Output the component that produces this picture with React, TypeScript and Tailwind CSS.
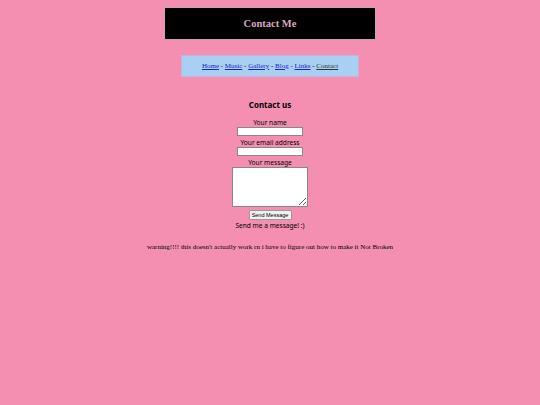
export default function App() {
  return (
    <div className="min-h-[405px] w-full bg-[#f48fb1] pt-[7px] font-['Liberation_Serif',serif] text-black">
      <div className="mx-auto flex h-[33px] w-[212px] items-center justify-center border border-[#c9a0b4] bg-black">
        <h1 className="text-[10.5px] font-bold text-[#dcaac2]">Contact Me</h1>
      </div>

      <nav className="mx-auto mt-[15px] flex h-[22px] w-[178px] items-center justify-center border border-[#c8b4d8] bg-[#a9d0f2] text-[7px]">
        <a href="#" className="text-[#2020d0] underline">Home</a>
        <span>&nbsp;-&nbsp;</span>
        <a href="#" className="text-[#2020d0] underline">Music</a>
        <span>&nbsp;-&nbsp;</span>
        <a href="#" className="text-[#2020d0] underline">Gallery</a>
        <span>&nbsp;-&nbsp;</span>
        <a href="#" className="text-[#2020d0] underline">Blog</a>
        <span>&nbsp;-&nbsp;</span>
        <a href="#" className="text-[#2020d0] underline">Links</a>
        <span>&nbsp;-&nbsp;</span>
        <a href="#" className="text-[#333] underline">Contact</a>
      </nav>

      <form className="mt-[23px] flex flex-col items-center font-['Comic_Sans_MS','Noto_Sans',sans-serif] text-[6.6px] leading-[9px]">
        <h2 className="mb-[8px] text-[8px] font-bold">Contact us</h2>
        <label className="mt-[1px]">Your name</label>
        <input type="text" className="h-[9px] w-[66px] border border-[#888] bg-white" />
        <label className="mt-[2px]">Your email address</label>
        <input type="text" className="h-[9px] w-[66px] border border-[#888] bg-white" />
        <label className="mt-[2px]">Your message</label>
        <textarea className="h-[40px] w-[76px] resize-y border border-[#888] bg-white" />
        <button type="button" className="mt-[3px] h-[10px] w-[43px] rounded-[1px] border border-[#999] bg-[#f0f0f0] font-['Liberation_Sans',sans-serif] text-[5.5px] leading-[8px]">
          Send Message
        </button>
        <p className="mt-[1px]">Send me a message! :)</p>
      </form>

      <p className="mt-[12px] text-center text-[7px]">
        warning!!!! this doesn't actually work rn i have to figure out how to make it Not Broken
      </p>
    </div>
  );
}
